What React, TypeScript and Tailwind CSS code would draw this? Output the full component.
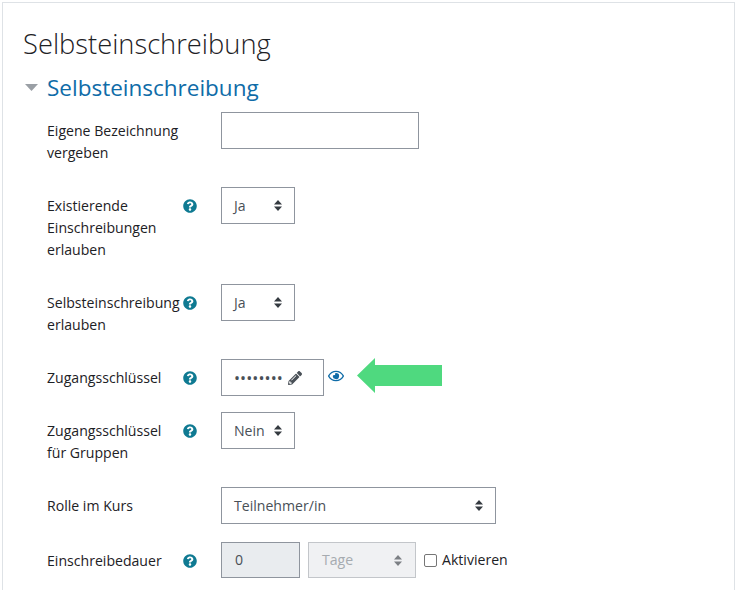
import { FaPencilAlt, FaQuestionCircle, FaRegEye } from 'react-icons/fa'
import type { ReactNode } from 'react'

function SortArrows({ className = 'text-[#343a40]' }: { className?: string }) {
  return (
    <svg width="8" height="11" viewBox="0 0 8 11" className={className} fill="currentColor">
      <path d="M0 4.5 4 0l4 4.5z" />
      <path d="M0 6.5 4 11l4-4.5z" />
    </svg>
  )
}

function Help() {
  return <FaQuestionCircle className="text-[14px] text-[#0f7a92]" />
}

function Row({
  label,
  help,
  mb = 'mb-4',
  children,
}: {
  label: ReactNode
  help?: boolean
  mb?: string
  children: ReactNode
}) {
  return (
    <div className={`flex items-start ${mb}`}>
      <div className="relative w-[174px] shrink-0 py-[7.5px] pr-[38px] leading-[22px] whitespace-nowrap">
        {label}
        {help && (
          <span className="absolute left-[136px] top-[12px] flex">
            <Help />
          </span>
        )}
      </div>
      <div className="relative flex items-center">{children}</div>
    </div>
  )
}

function Select({ value, width }: { value: string; width: string }) {
  return (
    <div
      className={`flex h-[37px] ${width} items-center justify-between border border-[#8f959e] pl-[12px] pr-[12px] text-[#495057]`}
    >
      <span>{value}</span>
      <SortArrows />
    </div>
  )
}

export default function App() {
  return (
    <div className="h-[590px] w-[738px] overflow-hidden bg-white pl-[2px] pt-[2px] font-['Open_Sans','Noto_Sans',sans-serif] text-[14.1px] text-[#1d2125]">
      <div className="h-[600px] w-[733px] border border-[#dee2e6] pl-[20px] pt-[24px]">
        <h2 className="mb-[12px] text-[27.3px] leading-[34px] font-light text-[#1d2125]">Selbsteinschreibung</h2>
        <div className="mb-[9px] flex items-center">
          <svg width="13" height="7" viewBox="0 0 13 7" className="mr-[9px] mb-[2px] ml-[2px] text-[#9a9fa5]" fill="currentColor">
            <path d="M0 0h13L6.5 7z" />
          </svg>
          <h3 className="text-[22.5px] leading-[30px] text-[#0f6ca8]">Selbsteinschreibung</h3>
        </div>
        <div className="pl-[24px]">
          <Row label={<>Eigene Bezeichnung<br />vergeben</>}>
            <div className="h-[37px] w-[198px] border border-[#8f959e]" />
          </Row>
          <Row label={<>Existierende<br />Einschreibungen<br />erlauben</>} help>
            <Select value="Ja" width="w-[74px]" />
          </Row>
          <Row label={<>Selbsteinschreibung<br />erlauben</>} help>
            <Select value="Ja" width="w-[74px]" />
          </Row>
          <Row label="Zugangsschlüssel" help>
            <div className="flex h-[37px] w-[103px] items-center border border-[#8f959e] pl-[12px] text-[#495057]">
              <span className="text-[16px] leading-none tracking-[0.1px]">••••••••</span>
              <FaPencilAlt className="ml-[5px] text-[14px]" />
            </div>
            <FaRegEye className="ml-[4px] mb-[3px] text-[16px] text-[#0f6ca8]" />
            <svg width="85" height="35" viewBox="0 0 85 35" className="absolute left-[136px] top-[-1px] text-[#4fd97f]" fill="currentColor">
              <path d="M0 17.5 18 0v7h67v21H18v7z" />
            </svg>
          </Row>
          <Row label={<>Zugangsschlüssel<br />für Gruppen</>} help>
            <Select value="Nein" width="w-[74px]" />
          </Row>
          <Row label="Rolle im Kurs" mb="mb-[18px]">
            <Select value="Teilnehmer/in" width="w-[275px]" />
          </Row>
          <Row label="Einschreibedauer" help>
            <div className="flex h-[36px] w-[79px] items-center border border-[#8f959e] bg-[#e9ecef] pl-[13px] text-[#495057]">0</div>
            <div className="ml-[8px] flex h-[36px] w-[108px] items-center justify-between border border-[#c3c6ca] bg-[#f0f1f3] pl-[13px] pr-[13px] text-[#a6abb0]">
              <span>Tage</span>
              <SortArrows className="text-[#7b7f84]" />
            </div>
            <span className="ml-[8px] h-[13px] w-[13px] rounded-[2px] border border-[#767676] bg-white" />
            <span className="ml-[5px]">Aktivieren</span>
          </Row>
        </div>
      </div>
    </div>
  )
}
